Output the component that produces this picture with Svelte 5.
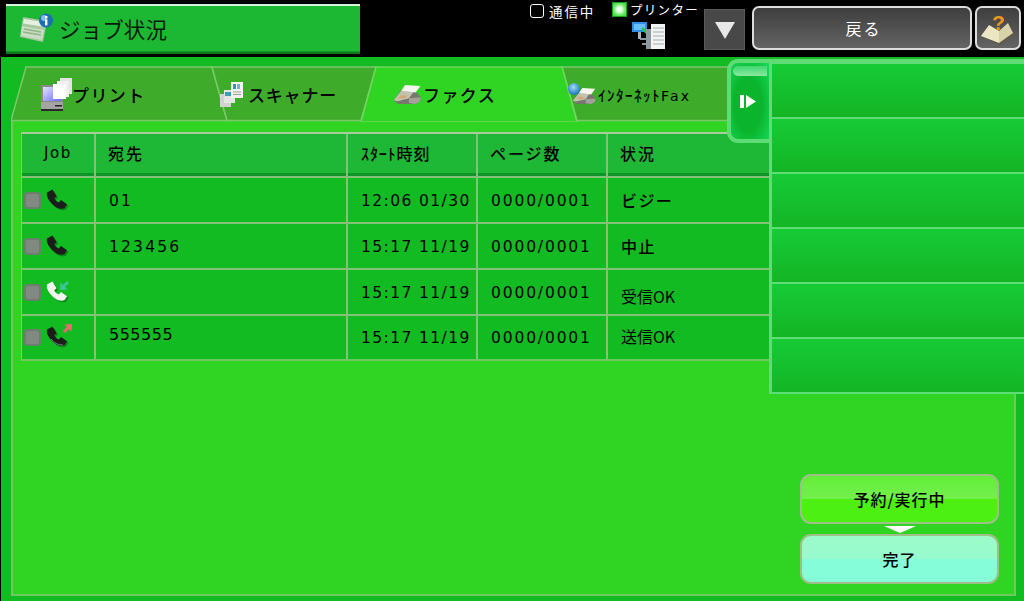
<script>
  const rows = [
    { id: 'a', icon: 'busy', dest: '01', start: '12:06 01/30', pages: '0000/0001', state: 'ビジー', stateClass: '', destClass: '' },
    { id: 'b', icon: 'busy', dest: '123456', start: '15:17 11/19', pages: '0000/0001', state: '中止', stateClass: '', destClass: '' },
    { id: 'c', icon: 'in', dest: '', start: '15:17 11/19', pages: '0000/0001', state: '受信OK', stateClass: 'low', destClass: '' },
    { id: 'd', icon: 'out', dest: '555555', start: '15:17 11/19', pages: '0000/0001', state: '送信OK', stateClass: 'high', destClass: 'alt' }
  ];
  const sideRows = [1, 2, 3, 4, 5, 6];
  const handset = 'M1 3.6 L6.4 0.4 L10.6 7.2 L8.2 9.2 C9 11 10.6 12.6 12.8 13.4 L15 11 L21 15.2 L18.6 19 C16 20.6 11.4 19.8 7.4 16.2 C2.8 12 0 7.4 1 3.6Z';
</script>

{#snippet fax(w, h)}
  <svg class="ico" width={w} height={h} viewBox="0 0 30 22">
    <path d="M1 17 L9 6 L23 7 L29 13 L29 18 L24 21 L6 21Z" fill="#77776e"/>
    <path d="M1 17 L9 7 L22 8 L17 15 L5 18Z" fill="#c4c2ae"/>
    <path d="M9 7 L13 1 L29 2 L24 9Z" fill="#f6f6f0"/>
    <path d="M8 12 L15 12 L13 15 L6 15Z" fill="#d4a872"/>
    <path d="M17 15 L29 14 L29 18 L24 21 L17 20Z" fill="#a2a29a"/>
  </svg>
{/snippet}

<div class="screen">
  <header class="top">
    <div class="title">
      <svg class="ico" width="34" height="32" viewBox="0 0 34 32">
        <path d="M4 5 L28 9 L24 30 L1 25Z" fill="#a8c8a0"/>
        <path d="M5 7 L27 10.5 L26 15 L4 11.5Z" fill="#e4efe0"/>
        <path d="M3 14 L25 18 L23 28 L2 24Z" fill="#c9dcc4"/>
        <path d="M5 17 L22 20 M4 20 L22 23" stroke="#94b48c" stroke-width="1.4"/>
        <circle cx="27" cy="8.5" r="7" fill="#1c6fb4"/>
        <circle cx="25" cy="6" r="3" fill="#7cc0ea"/>
        <rect x="26" y="4" width="2.4" height="2.4" fill="#fff"/>
        <rect x="26" y="7.4" width="2.4" height="6" fill="#fff"/>
      </svg>
      <span>ジョブ状況</span>
    </div>
    <div class="status">
      <div class="comm"><i class="box"></i><span>通信中</span></div>
      <div class="printer">
        <div class="pline"><i class="led"></i><span>プリンター</span></div>
        <svg class="net" width="33" height="27" viewBox="0 0 33 27">
          <rect x="0" y="0" width="15" height="10" fill="#2f8fe8"/>
          <rect x="2" y="2" width="11" height="6" fill="#66c0ff"/>
          <rect x="6" y="10" width="3" height="7" fill="#a8b4bc"/>
          <path d="M8 17 H16 M10 22 H16" stroke="#8a98a4" stroke-width="2"/>
          <path d="M10 6 L16 12" stroke="#2fc44a" stroke-width="2.5"/>
          <rect x="14" y="7" width="6" height="20" fill="#8f9aa0"/>
          <rect x="19" y="2" width="14" height="25" fill="#f2f4f4"/>
          <path d="M21 6 H32 M21 10 H32 M21 14 H32 M21 18 H32 M21 22 H32" stroke="#a4acb0" stroke-width="1.2"/>
        </svg>
      </div>
    </div>
    <button class="drop"><i></i></button>
    <button class="back">戻る</button>
    <button class="help">
      <svg class="ico" width="36" height="36" viewBox="0 0 36 36">
        <path d="M1 27 L9 17 L18 22 L28 15 L34 25 L21 35 Z" fill="#5e5b4a"/>
        <path d="M1 26 L9 15 L19 21 L19 33Z" fill="#ece6c4"/>
        <path d="M19 21 L28 13 L33 23 L19 33Z" fill="#d8d2a8"/>
      </svg>
      <span class="qm">?</span>
    </button>
  </header>

  <main class="main">
    <nav class="tabs">
      <svg class="tabshape" width="720" height="56" viewBox="0 0 720 56">
        <path d="M0 54.5 L15 1 H201 L216 54.5Z" class="off"/>
        <path d="M201 1 H365 L350 54.5 H216Z" class="off"/>
        <path d="M551 1 H720 V54.5 H566Z" class="off"/>
        <path d="M350 56 L365 1 H551 L566 56Z" class="on"/>
      </svg>
      <div class="tab t1">
        <svg class="ico" width="33" height="33" viewBox="0 0 33 33">
          <defs>
            <linearGradient id="scr" x1="0" y1="0" x2="1" y2="1">
              <stop offset="0" stop-color="#e4e4ff"/>
              <stop offset="1" stop-color="#6a6aff"/>
            </linearGradient>
          </defs>
          <rect x="0" y="7" width="22" height="17" fill="#8a8a8a"/>
          <rect x="2" y="9" width="18" height="14" fill="url(#scr)"/>
          <rect x="0" y="24" width="22" height="8" fill="#a4a4a4"/>
          <rect x="0" y="31" width="22" height="2" fill="#2a2a2a"/>
          <rect x="14" y="27" width="7" height="1.5" fill="#222"/>
          <rect x="19" y="0" width="12" height="16" fill="#e4e4e4"/>
          <rect x="16" y="3" width="12" height="16" fill="#f0f0f0"/>
          <rect x="12" y="6" width="13" height="15" fill="#fff"/>
        </svg>
        <span>プリント</span>
      </div>
      <div class="tab t2">
        <svg class="ico" width="24" height="27" viewBox="0 0 24 27">
          <rect x="1" y="13" width="11" height="13" fill="#d0d4d0"/>
          <rect x="5" y="9" width="11" height="13" fill="#e2e6e2"/>
          <rect x="6" y="11" width="8" height="4" fill="#3d9db4"/>
          <rect x="12" y="1" width="12" height="16" fill="#f2f4f2"/>
          <rect x="14" y="3" width="3" height="5" fill="#2f9ab8"/>
          <rect x="18" y="3" width="3" height="5" fill="#6ab8ca"/>
          <path d="M14 11 H22 M14 13.5 H22" stroke="#98a098"/>
        </svg>
        <span>スキャナー</span>
      </div>
      <div class="tab t3">
        {@render fax(30, 21)}
        <span>ファクス</span>
      </div>
      <div class="tab t4">
        <span class="globe-wrap">
          <i class="globe"></i>
          {@render fax(24, 18)}
        </span>
        <span class="narrow">ｲﾝﾀｰﾈｯﾄ<span class="latin">Fax</span></span>
      </div>
    </nav>

    <section class="panel">
      <div class="table">
        <div class="row head">
          <div class="cell job">Job</div>
          <div class="cell">宛先</div>
          <div class="cell">ｽﾀｰﾄ時刻</div>
          <div class="cell">ページ数</div>
          <div class="cell">状況</div>
        </div>
        {#each rows as r (r.id)}
          <div class="row">
            <div class="cell jobcell">
              <i class="check"></i>
              <span class="phone">
                <svg width="24" height="24" viewBox="0 0 24 24">
                  <path d={handset} transform="translate(1.5 1.5)" fill="#0a5a14" opacity=".55"/>
                  <path d={handset} fill={r.icon === 'in' ? '#f2f5f2' : '#1c1c1c'}/>
                  {#if r.icon === 'out'}
                    <path d="M5 13 C8 17 12 19 17 19" stroke="#999" fill="none" stroke-width=".8"/>
                  {/if}
                </svg>
                {#if r.icon === 'in'}
                  <svg class="arrow" width="11" height="11" viewBox="0 0 11 11">
                    <path d="M10 3 L6 7 L8.5 9.5 L1 10 L1.5 2.5 L4 5 L8 1Z" fill="#3fc49a"/>
                  </svg>
                {:else if r.icon === 'out'}
                  <svg class="arrow up" width="11" height="11" viewBox="0 0 11 11">
                    <path d="M1 8 L5 4 L2.5 1.5 L10 1 L9.5 8.5 L7 6 L3 10Z" fill="#f0686e"/>
                  </svg>
                {/if}
              </span>
            </div>
            <div class="cell num dest {r.destClass}">{r.dest}</div>
            <div class="cell num">{r.start}</div>
            <div class="cell num pages">{r.pages}</div>
            <div class="cell state {r.stateClass}">{r.state}</div>
          </div>
        {/each}
      </div>

      <div class="actions">
        <button class="act live">予約/実行中</button>
        <i class="pointer"></i>
        <button class="act done">完了</button>
      </div>
    </section>

    <aside class="side">
      {#each sideRows as s (s)}<div class="siderow"></div>{/each}
    </aside>
    <button class="handle">
      <i class="gloss"></i>
      <svg width="16" height="13" viewBox="0 0 16 13">
        <rect x="0" y="0" width="4" height="13" fill="#fff"/>
        <path d="M6 0 L16 6.5 L6 13Z" fill="#fff"/>
      </svg>
    </button>
  </main>
</div>

<style>
  :global(body) { margin: 0; background: #000; }
  .screen {
    width: 1024px; height: 601px; overflow: hidden; background: #000;
    display: flex; flex-direction: column;
    font-family: "Noto Sans CJK JP", "Noto Sans", sans-serif; color: #000;
  }
  i { display: block; }
  button { font: inherit; padding: 0; cursor: pointer; }
  .ico { display: block; flex: none; }

  .top { height: 57px; flex: none; display: flex; align-items: flex-start; box-sizing: border-box; padding: 4px 0 0 6px; }
  .title {
    width: 354px; height: 50px; box-sizing: border-box; display: flex; align-items: center; gap: 6px; padding: 0 0 2px 13px;
    background: #1cb834; border-top: 2px solid #d9f5de;
    border-bottom: 2px solid #0c7c1a; box-shadow: inset 0 -1px 0 #149a26;
    font-size: 21.5px; letter-spacing: .1px; color: #0a1a0a;
  }
  .status { display: flex; width: 344px; color: #fff; font-size: 13px; box-sizing: border-box; padding-left: 170px; }
  .comm { display: flex; align-items: center; gap: 5px; height: 16px; letter-spacing: 1.9px; font-size: 13.5px; margin-top: -1px; width: 82px; flex: none; }
  .box { width: 12px; height: 12px; border: 1.5px solid #fff; border-radius: 3px; flex: none; }
  .printer { display: flex; flex-direction: column; flex: none; width: 86px; margin-top: -2px; }
  .pline { display: flex; align-items: center; gap: 3px; height: 15px; font-size: 12.5px; letter-spacing: 1.3px; white-space: nowrap; }
  .led { width: 13px; height: 13px; flex: none; background: radial-gradient(circle at 50% 50%, #e8ffe8 0 25%, #6ee86a 60%, #2ed82a); border: 1px solid #1aa01a; }
  .net { margin: 5px 0 0 20px; }
  .drop { width: 41px; height: 41px; margin: 5px 7px 0 0; flex: none; background: #484848; border: 1px solid #5a5a5a; display: flex; align-items: center; justify-content: center; }
  .drop i { width: 0; height: 0; border-left: 10px solid transparent; border-right: 10px solid transparent; border-top: 17px solid #e8e8e8; margin-top: 2px; }
  .back { width: 220px; height: 44px; margin: 2px 3px 0 0; padding-left: 3px; flex: none; border: 2px solid #dcdcdc; border-radius: 7px; background: linear-gradient(#3e3e3e, #646464); color: #fff; font-size: 16px; letter-spacing: 2px; box-sizing: border-box; }
  .help { position: relative; width: 46px; height: 44px; margin-top: 2px; flex: none; border: 2px solid #dcdcdc; border-radius: 7px; background: linear-gradient(#3e3e3e, #646464); box-sizing: border-box; display: flex; align-items: center; justify-content: center; }
  .qm { position: absolute; left: 15px; top: 4px; font: bold 21px/1 "Liberation Sans", sans-serif; color: #e8981c; }

  .main { flex: 1; position: relative; margin-left: 1px; background: #12bb22; padding: 9px 0 5px 10px; display: flex; flex-direction: column; min-height: 0; }
  .tabs { position: relative; height: 55px; flex: none; display: flex; margin-left: 0; z-index: 1; }
  .tabshape { position: absolute; left: 0; top: 0; }
  .off { fill: #3fab2a; stroke: #7cc86c; stroke-width: 1.5; }
  .on { fill: #30d423; stroke: #6fd660; stroke-width: 1.5; }
  .tab { position: relative; display: flex; align-items: center; height: 100%; box-sizing: border-box; font-size: 17px; font-weight: 500; white-space: nowrap; flex: none; padding-top: 1px; }
  .t1 { width: 208px; padding-left: 30px; letter-spacing: 1.4px; }
  .t1 span { margin-left: -2px; }
  .t2 { width: 149px; padding-left: 0; letter-spacing: .8px; gap: 5px; }
  .t3 { width: 198px; padding-left: 24px; letter-spacing: 1.4px; gap: 1px; }
  .t4 { padding-left: 2px; gap: 2px; }
  .globe-wrap { position: relative; display: block; padding: 4px 0 0 4px; }
  .globe { position: absolute; left: 0; top: 0; width: 12px; height: 12px; border-radius: 50%; background: radial-gradient(circle at 45% 35%, #a8dcf4, #1f7cc4 70%); }
  .narrow { font-size: 15px; letter-spacing: 1.5px; font-weight: 500; }
  .latin { font-family: "DejaVu Sans", sans-serif; font-size: 14px; font-weight: 400; letter-spacing: 2.2px; }

  .panel { flex: 1; position: relative; box-sizing: border-box; width: 1005px; background: #30d423; border: 2px solid #6fc860; border-top: 0; padding: 11px 0 0 8px; display: flex; flex-direction: column; min-height: 0; }

  .table { width: 747px; flex: none; border-top: 2px solid #a8cc9c; border-left: 1px solid #8cc47e; }
  .row { display: grid; grid-template-columns: 74px 252px 130px 130px 161px; height: 46px; box-sizing: border-box; background: #11bb21; border-bottom: 2px solid #83c277; }
  .row:last-child { height: 45px; border-bottom-color: #6fc860; }
  .head { background: #1fb736; box-shadow: inset 0 -3px 0 #119326; box-sizing: content-box; height: 42px; }
  .cell { display: flex; align-items: center; padding-left: 12px; box-sizing: border-box; border-right: 2px solid #83c277; font-size: 16px; font-weight: 500; letter-spacing: 1.6px; white-space: nowrap; min-width: 0; }
  .head .cell { padding-bottom: 5px; letter-spacing: 1.9px; }
  .cell:first-child { padding-left: 2px; }
  .cell:last-child { border-right: 0; }
  .head .cell:nth-child(3) { padding-left: 13px; letter-spacing: .9px; }
  .head .cell:nth-child(5) { padding-left: 12px; letter-spacing: 1.9px; }
  .head .cell.job { justify-content: center; font-family: "DejaVu Sans", sans-serif; font-size: 15px; font-weight: 400; letter-spacing: 1.6px; padding-left: 0; }
  .num { font-family: "DejaVu Sans", sans-serif; font-weight: 400; font-size: 15.5px; letter-spacing: 1.4px; padding-left: 13px; padding-top: 1px; }
  .pages { letter-spacing: 1.85px; }
  .dest { letter-spacing: 2.2px; padding-left: 13px; }
  .dest.alt { font-size: 16px; letter-spacing: .5px; padding-bottom: 6px; padding-top: 0; }
  .state { letter-spacing: 1.4px; padding-left: 13px; }
  .state.low { padding-top: 7px; letter-spacing: 0; font-weight: 400; }
  .state.high { padding-bottom: 3px; letter-spacing: 0; font-weight: 400; }
  .jobcell { gap: 5px; padding-left: 2px; }
  .check { width: 17px; height: 17px; box-sizing: border-box; background: #808a80; border: 2px solid #6e7e6e; border-radius: 4px; flex: none; }
  .phone { position: relative; display: block; width: 24px; height: 24px; margin-top: 1px; }
  .phone svg { display: block; }
  .arrow { position: absolute; left: 13px; top: -1px; }
  .arrow.up { left: 16px; top: -3px; }

  .actions { position: absolute; left: 787px; top: 353px; width: 199px; display: flex; flex-direction: column; align-items: center; }
  .act { width: 199px; height: 50px; box-sizing: border-box; border: 2px solid #a0bf88; border-radius: 11px; font-size: 16px; font-weight: 500; letter-spacing: 1px; color: #000; }
  .live { background: linear-gradient(#62ee38, #74f04e 50%, #4cf012 50%, #4cf012); }
  .done { height: 50px; background: linear-gradient(#9cfbc9, #97fbce 50%, #85fdd9 50%, #85fdd9); }
  .pointer { width: 0; height: 0; border-left: 16px solid transparent; border-right: 16px solid transparent; border-top: 7px solid #fff; margin: 2px 0 1px; }

  .side { position: absolute; left: 768px; top: 2px; width: 255px; box-sizing: border-box; background: #5fdc75; border-left: 3px solid #5fdc75; padding: 5px 0 2px; display: flex; flex-direction: column; gap: 2px; z-index: 2; }
  .siderow { height: 53px; background: linear-gradient(#16cb36, #14b525); }
  .handle { position: absolute; left: 726px; top: 2px; width: 42px; height: 84px; box-sizing: border-box; border: 4px solid #5fdc75; border-right: 0; border-radius: 11px 0 0 11px; background: radial-gradient(ellipse at 45% 55%, #0ab42c 45%, #18dc5c); display: flex; align-items: center; justify-content: center; z-index: 3; padding: 0 4px 0 0; }
  .gloss { position: absolute; left: 2px; right: 2px; top: 3px; height: 10px; border-radius: 5px 0 0 5px; background: linear-gradient(#3ed870, #8ce8a0); }
</style>
